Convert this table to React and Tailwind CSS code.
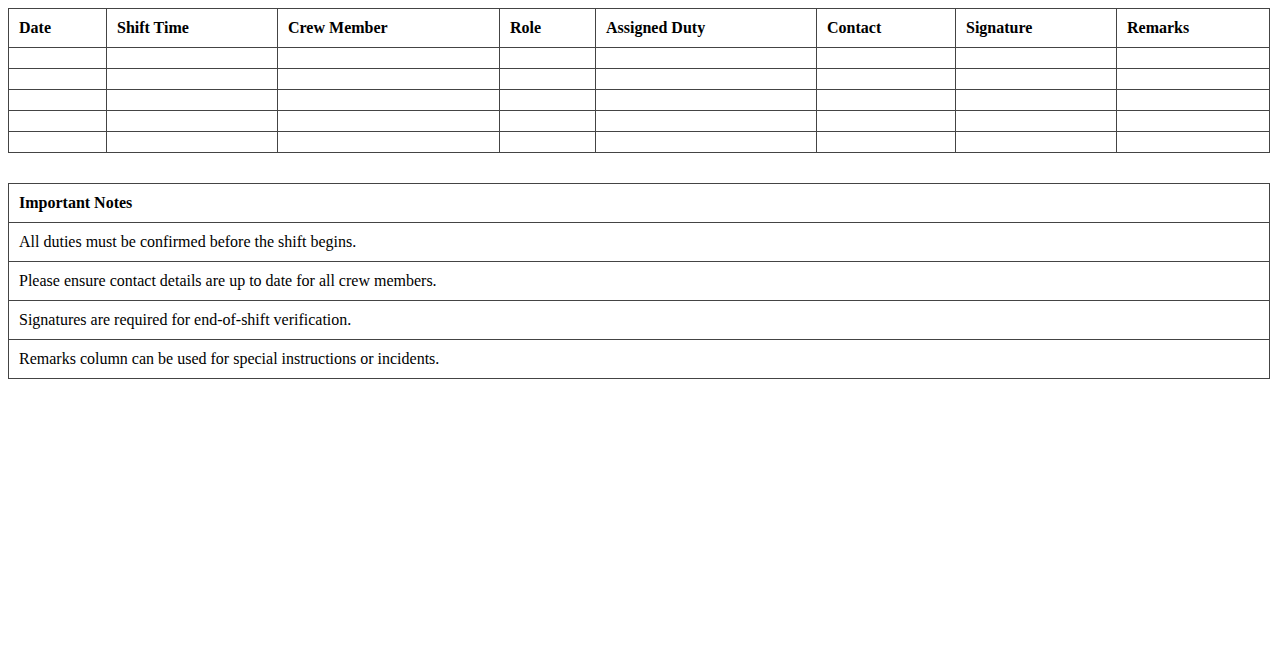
import React from "react";

const columns = [
    {label: "Date", w: "w-[98px]"},
    {label: "Shift Time", w: "w-[171px]"},
    {label: "Crew Member", w: "w-[222px]"},
    {label: "Role", w: "w-[96px]"},
    {label: "Assigned Duty", w: "w-[221px]"},
    {label: "Contact", w: "w-[139px]"},
    {label: "Signature", w: "w-[161px]"},
    {label: "Remarks", w: "w-[153px]"},
];

const notes = [
    "All duties must be confirmed before the shift begins.",
    "Please ensure contact details are up to date for all crew members.",
    "Signatures are required for end-of-shift verification.",
    "Remarks column can be used for special instructions or incidents.",
];

export default function App() {
    return (
        <div className="m-2 font-['Liberation_Serif',serif] text-[16px] leading-[18px] text-black bg-white">
            {/* Duty roster */}
            <table className="w-full table-fixed border-collapse">
                <thead>
                <tr>
                    {columns.map((c) => (
                        <th key={c.label} className={`${c.w} border border-[#444] p-[10px] text-left font-bold`}>
                            {c.label}
                        </th>
                    ))}
                </tr>
                </thead>
                <tbody>
                {[0, 1, 2, 3, 4].map((r) => (
                    <tr key={r}>
                        {columns.map((c) => (
                            <td key={c.label} className="border border-[#444] p-[10px] h-[21px]"></td>
                        ))}
                    </tr>
                ))}
                </tbody>
            </table>

            {/* Notes */}
            <table className="w-full border-collapse mt-[30px]">
                <tbody>
                <tr>
                    <th className="border border-[#444] p-[10px] text-left font-bold">Important Notes</th>
                </tr>
                {notes.map((n) => (
                    <tr key={n}>
                        <td className="border border-[#444] p-[10px]">{n}</td>
                    </tr>
                ))}
                </tbody>
            </table>
        </div>
    )
}
